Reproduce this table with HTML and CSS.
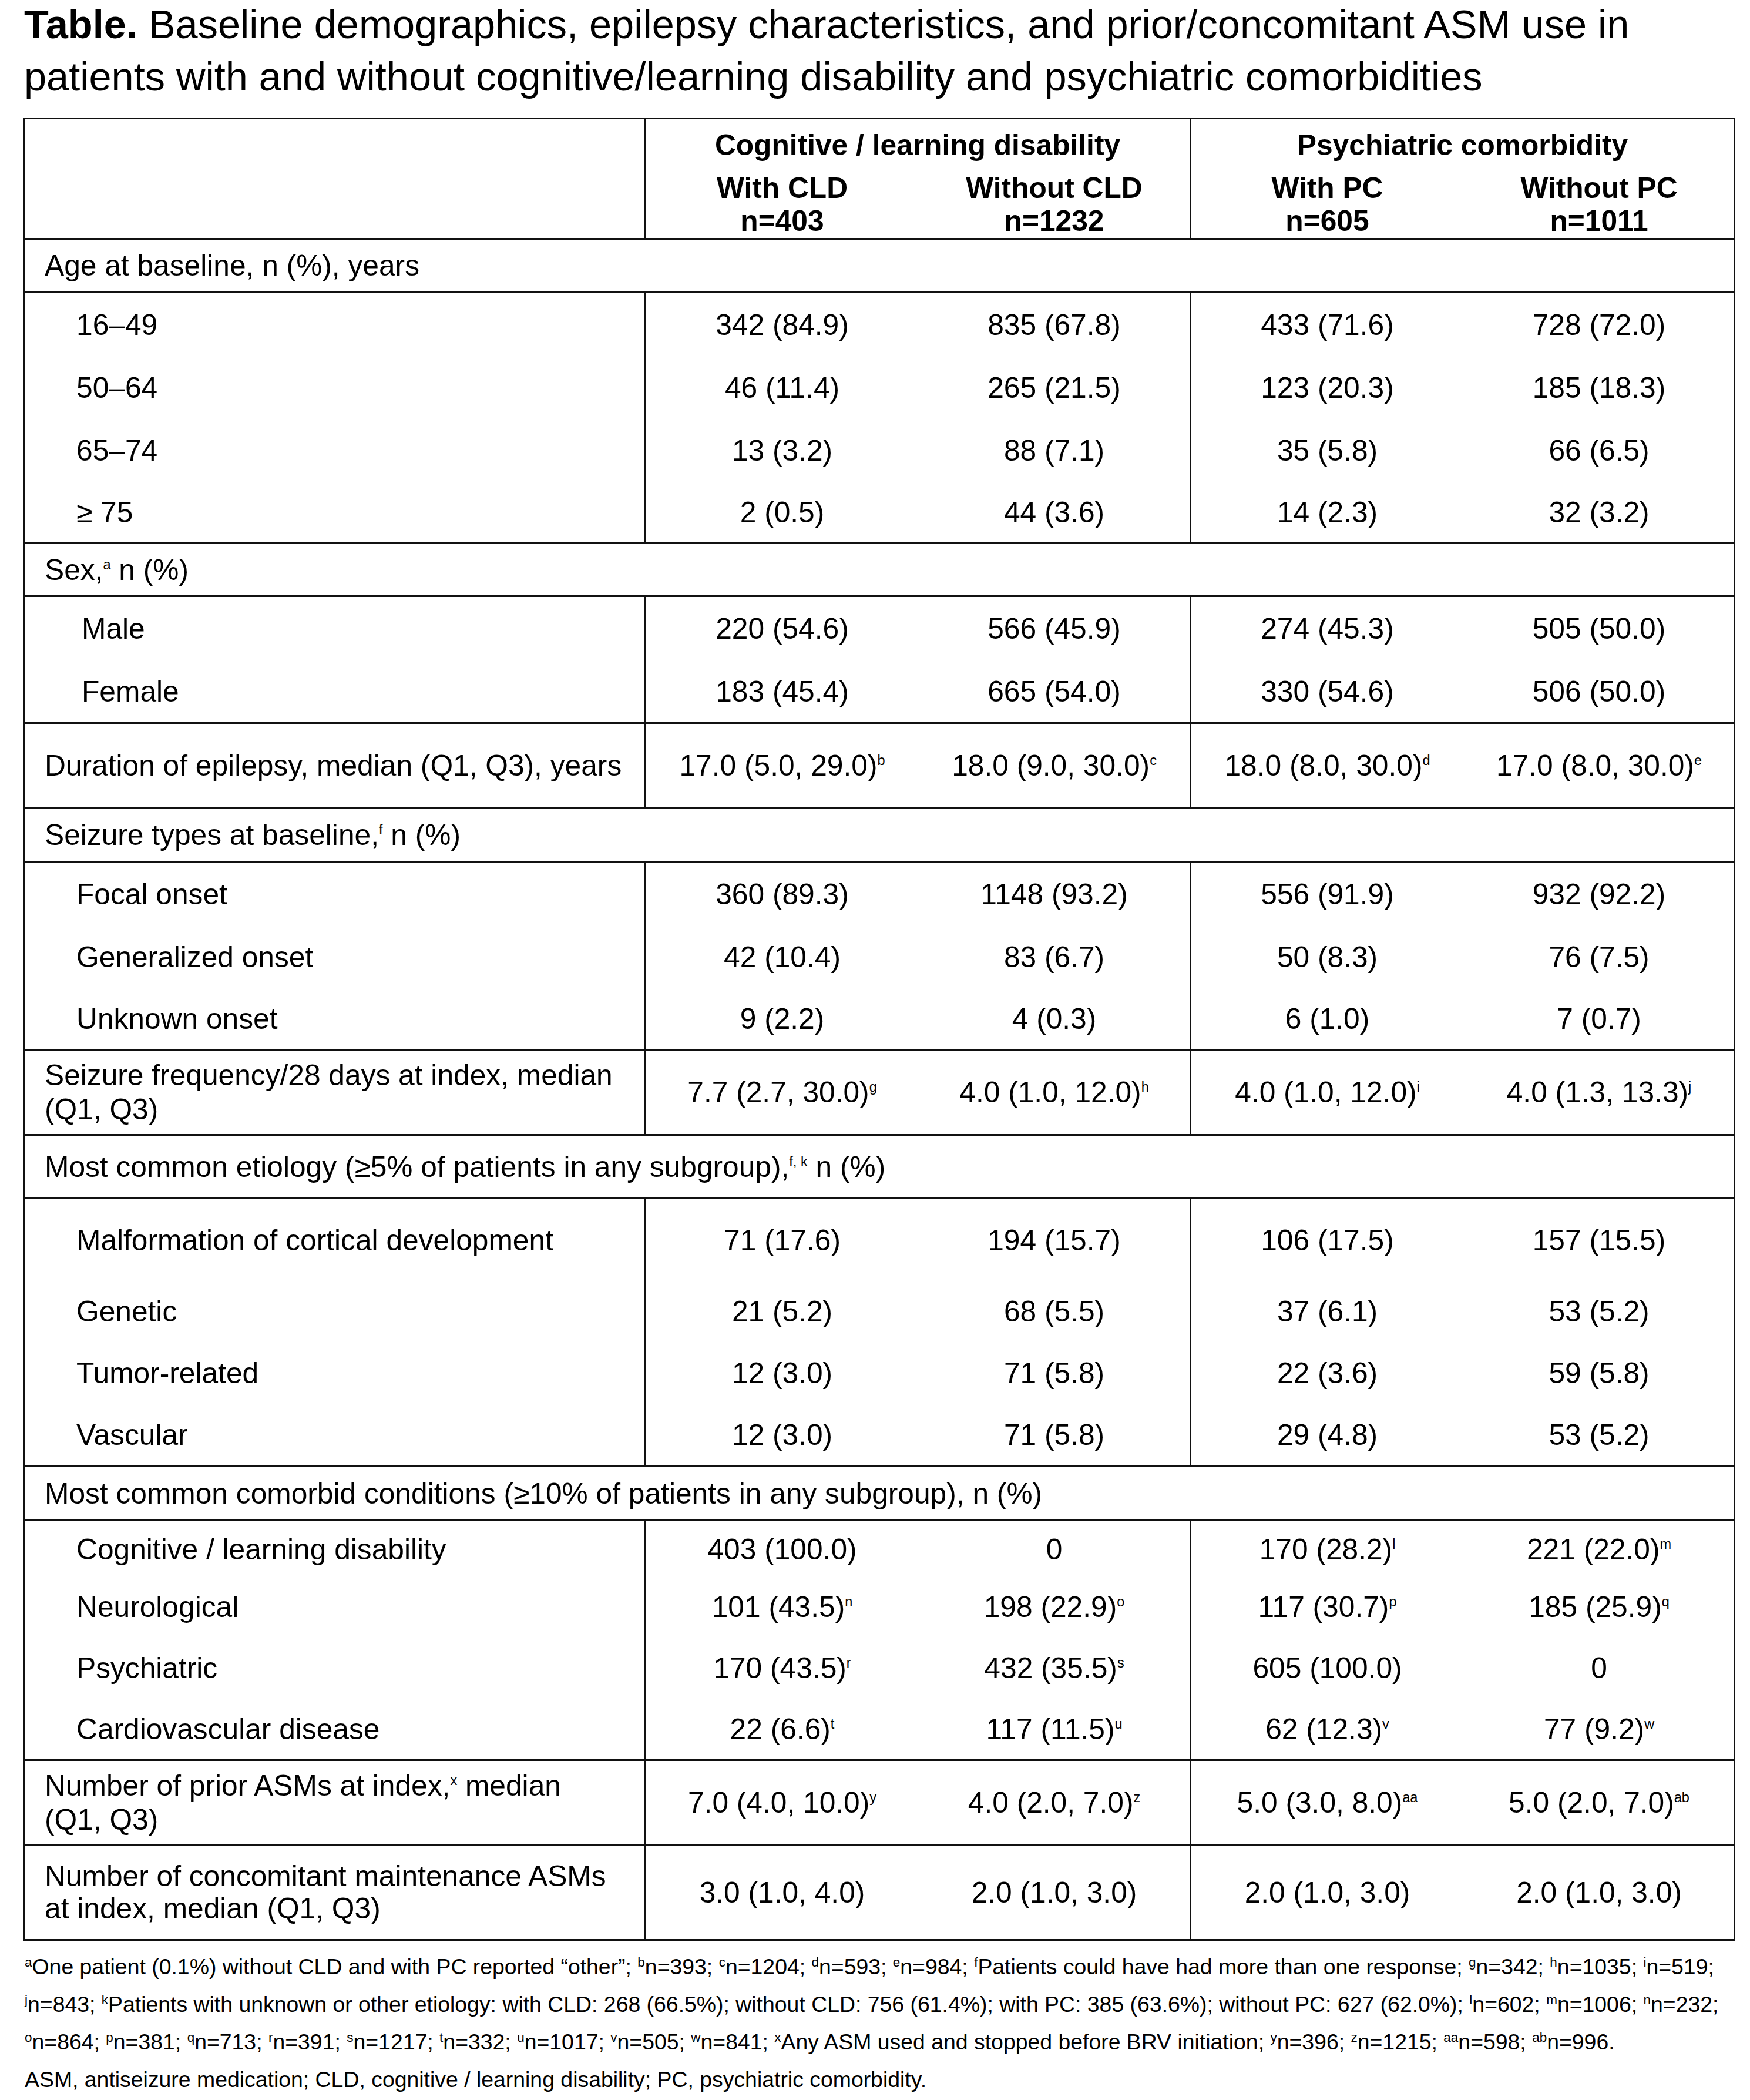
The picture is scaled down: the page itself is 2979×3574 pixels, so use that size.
FILE: index.html
```html
<!DOCTYPE html>
<html lang="en">
<head>
<meta charset="utf-8">
<title>Table</title>
<link rel="stylesheet" href="styles.css">
</head>
<body>
<div class="page">
  <h1 class="title"><b>Table.</b> Baseline demographics, epilepsy characteristics, and prior/concomitant ASM use in<br>patients with and without cognitive/learning disability and psychiatric comorbidities</h1>

  <div class="table">
    <div class="thead">
      <div class="blank"></div>
      <div class="grp first">
        <div class="grp-title">Cognitive / learning disability</div>
        <div class="subs">
          <div>With CLD<br>n=403</div>
          <div>Without CLD<br>n=1232</div>
        </div>
      </div>
      <div class="grp">
        <div class="grp-title">Psychiatric comorbidity</div>
        <div class="subs">
          <div>With PC<br>n=605</div>
          <div>Without PC<br>n=1011</div>
        </div>
      </div>
    </div>

    <div class="cat h91"><span>Age at baseline, n (%), years</span></div>
    <div class="row h107"><div class="cell label"><span>16–49</span></div><div class="cell"><span>342 (84.9)</span></div><div class="cell sep"><span>835 (67.8)</span></div><div class="cell"><span>433 (71.6)</span></div><div class="cell"><span>728 (72.0)</span></div></div>
    <div class="row h107"><div class="cell label"><span>50–64</span></div><div class="cell"><span>46 (11.4)</span></div><div class="cell sep"><span>265 (21.5)</span></div><div class="cell"><span>123 (20.3)</span></div><div class="cell"><span>185 (18.3)</span></div></div>
    <div class="row h107"><div class="cell label"><span>65–74</span></div><div class="cell"><span>13 (3.2)</span></div><div class="cell sep"><span>88 (7.1)</span></div><div class="cell"><span>35 (5.8)</span></div><div class="cell"><span>66 (6.5)</span></div></div>
    <div class="row h106 end"><div class="cell label"><span>≥ 75</span></div><div class="cell"><span>2 (0.5)</span></div><div class="cell sep"><span>44 (3.6)</span></div><div class="cell"><span>14 (2.3)</span></div><div class="cell"><span>32 (3.2)</span></div></div>

    <div class="cat h90"><span>Sex,<sup>a</sup> n (%)</span></div>
    <div class="row h108"><div class="cell label sexl"><span>Male</span></div><div class="cell"><span>220 (54.6)</span></div><div class="cell sep"><span>566 (45.9)</span></div><div class="cell"><span>274 (45.3)</span></div><div class="cell"><span>505 (50.0)</span></div></div>
    <div class="row h108 end"><div class="cell label sexl"><span>Female</span></div><div class="cell"><span>183 (45.4)</span></div><div class="cell sep"><span>665 (54.0)</span></div><div class="cell"><span>330 (54.6)</span></div><div class="cell"><span>506 (50.0)</span></div></div>

    <div class="row h144 end"><div class="cell label top"><span>Duration of epilepsy, median (Q1, Q3), years</span></div><div class="cell"><span>17.0 (5.0, 29.0)<sup>b</sup></span></div><div class="cell sep"><span>18.0 (9.0, 30.0)<sup>c</sup></span></div><div class="cell"><span>18.0 (8.0, 30.0)<sup>d</sup></span></div><div class="cell"><span>17.0 (8.0, 30.0)<sup>e</sup></span></div></div>

    <div class="cat h92"><span>Seizure types at baseline,<sup>f</sup> n (%)</span></div>
    <div class="row h107"><div class="cell label"><span>Focal onset</span></div><div class="cell"><span>360 (89.3)</span></div><div class="cell sep"><span>1148 (93.2)</span></div><div class="cell"><span>556 (91.9)</span></div><div class="cell"><span>932 (92.2)</span></div></div>
    <div class="row h107"><div class="cell label"><span>Generalized onset</span></div><div class="cell"><span>42 (10.4)</span></div><div class="cell sep"><span>83 (6.7)</span></div><div class="cell"><span>50 (8.3)</span></div><div class="cell"><span>76 (7.5)</span></div></div>
    <div class="row h106 end"><div class="cell label"><span>Unknown onset</span></div><div class="cell"><span>9 (2.2)</span></div><div class="cell sep"><span>4 (0.3)</span></div><div class="cell"><span>6 (1.0)</span></div><div class="cell"><span>7 (0.7)</span></div></div>

    <div class="row h145 end"><div class="cell label top"><span>Seizure frequency/28 days at index, median<br>(Q1, Q3)</span></div><div class="cell"><span>7.7 (2.7, 30.0)<sup>g</sup></span></div><div class="cell sep"><span>4.0 (1.0, 12.0)<sup>h</sup></span></div><div class="cell"><span>4.0 (1.0, 12.0)<sup>i</sup></span></div><div class="cell"><span>4.0 (1.3, 13.3)<sup>j</sup></span></div></div>

    <div class="cat h108"><span>Most common etiology (≥5% of patients in any subgroup),<sup>f, k</sup> n (%)</span></div>
    <div class="row h140"><div class="cell label"><span>Malformation of cortical development</span></div><div class="cell"><span>71 (17.6)</span></div><div class="cell sep"><span>194 (15.7)</span></div><div class="cell"><span>106 (17.5)</span></div><div class="cell"><span>157 (15.5)</span></div></div>
    <div class="row h102"><div class="cell label"><span>Genetic</span></div><div class="cell"><span>21 (5.2)</span></div><div class="cell sep"><span>68 (5.5)</span></div><div class="cell"><span>37 (6.1)</span></div><div class="cell"><span>53 (5.2)</span></div></div>
    <div class="row h107"><div class="cell label"><span>Tumor-related</span></div><div class="cell"><span>12 (3.0)</span></div><div class="cell sep"><span>71 (5.8)</span></div><div class="cell"><span>22 (3.6)</span></div><div class="cell"><span>59 (5.8)</span></div></div>
    <div class="row h107 end"><div class="cell label"><span>Vascular</span></div><div class="cell"><span>12 (3.0)</span></div><div class="cell sep"><span>71 (5.8)</span></div><div class="cell"><span>29 (4.8)</span></div><div class="cell"><span>53 (5.2)</span></div></div>

    <div class="cat h92"><span>Most common comorbid conditions (≥10% of patients in any subgroup), n (%)</span></div>
    <div class="row h95"><div class="cell label"><span>Cognitive / learning disability</span></div><div class="cell"><span>403 (100.0)</span></div><div class="cell sep"><span>0</span></div><div class="cell"><span>170 (28.2)<sup>l</sup></span></div><div class="cell"><span>221 (22.0)<sup>m</sup></span></div></div>
    <div class="row h101"><div class="cell label"><span>Neurological</span></div><div class="cell"><span>101 (43.5)<sup>n</sup></span></div><div class="cell sep"><span>198 (22.9)<sup>o</sup></span></div><div class="cell"><span>117 (30.7)<sup>p</sup></span></div><div class="cell"><span>185 (25.9)<sup>q</sup></span></div></div>
    <div class="row h107"><div class="cell label"><span>Psychiatric</span></div><div class="cell"><span>170 (43.5)<sup>r</sup></span></div><div class="cell sep"><span>432 (35.5)<sup>s</sup></span></div><div class="cell"><span>605 (100.0)</span></div><div class="cell"><span>0</span></div></div>
    <div class="row h105 end"><div class="cell label"><span>Cardiovascular disease</span></div><div class="cell"><span>22 (6.6)<sup>t</sup></span></div><div class="cell sep"><span>117 (11.5)<sup>u</sup></span></div><div class="cell"><span>62 (12.3)<sup>v</sup></span></div><div class="cell"><span>77 (9.2)<sup>w</sup></span></div></div>

    <div class="row h144 end"><div class="cell label top"><span>Number of prior ASMs at index,<sup>x</sup> median<br>(Q1, Q3)</span></div><div class="cell"><span>7.0 (4.0, 10.0)<sup>y</sup></span></div><div class="cell sep"><span>4.0 (2.0, 7.0)<sup>z</sup></span></div><div class="cell"><span>5.0 (3.0, 8.0)<sup>aa</sup></span></div><div class="cell"><span>5.0 (2.0, 7.0)<sup>ab</sup></span></div></div>

    <div class="row h159 multi"><div class="cell label top"><span>Number of concomitant maintenance ASMs<br>at index, median (Q1, Q3)</span></div><div class="cell"><span>3.0 (1.0, 4.0)</span></div><div class="cell sep"><span>2.0 (1.0, 3.0)</span></div><div class="cell"><span>2.0 (1.0, 3.0)</span></div><div class="cell"><span>2.0 (1.0, 3.0)</span></div></div>
  </div>

  <div class="notes">
    <p class="note"><sup>a</sup>One patient (0.1%) without CLD and with PC reported “other”; <sup>b</sup>n=393; <sup>c</sup>n=1204; <sup>d</sup>n=593; <sup>e</sup>n=984; <sup>f</sup>Patients could have had more than one response; <sup>g</sup>n=342; <sup>h</sup>n=1035; <sup>i</sup>n=519;<br><sup>j</sup>n=843; <sup>k</sup>Patients with unknown or other etiology: with CLD: 268 (66.5%); without CLD: 756 (61.4%); with PC: 385 (63.6%); without PC: 627 (62.0%); <sup>l</sup>n=602; <sup>m</sup>n=1006; <sup>n</sup>n=232;<br><sup>o</sup>n=864; <sup>p</sup>n=381; <sup>q</sup>n=713; <sup>r</sup>n=391; <sup>s</sup>n=1217; <sup>t</sup>n=332; <sup>u</sup>n=1017; <sup>v</sup>n=505; <sup>w</sup>n=841; <sup>x</sup>Any ASM used and stopped before BRV initiation; <sup>y</sup>n=396; <sup>z</sup>n=1215; <sup>aa</sup>n=598; <sup>ab</sup>n=996.</p>
    <p class="note">ASM, antiseizure medication; CLD, cognitive / learning disability; PC, psychiatric comorbidity.</p>
  </div>
</div>
</body>
</html>
```

FILE: styles.css
```css
* {
  box-sizing: border-box;
}

html, body {
  margin: 0;
  padding: 0;
  background: #ffffff;
}

body {
  color: #000000;
  font-family: "Liberation Sans", Arial, "Helvetica Neue", sans-serif;
}

.page {
  width: 2979px;
  padding: 0 0 0 40px;
}

.title {
  margin: -3px 0 0 1px;
  font-size: 68.5px;
  line-height: 89px;
  font-weight: normal;
  white-space: nowrap;
}

.title b {
  font-weight: bold;
}

.table {
  margin-top: 25px;
  width: 2914px;
  border-left: 2px solid #111;
  border-right: 2px solid #111;
  border-top: 3px solid #111;
  border-bottom: 3px solid #111;
  font-size: 49.7px;
  line-height: 58px;
}

.thead {
  display: grid;
  grid-template-columns: 1057px 928px 925px;
  height: 205px;
  border-bottom: 3px solid #111;
  font-weight: bold;
}

.blank {
  border-right: 2px solid #111;
}

.grp {
  display: flex;
  flex-direction: column;
  padding-top: 15px;
}

.grp.first {
  border-right: 2px solid #111;
}

.grp-title {
  text-align: center;
  line-height: 58px;
  white-space: nowrap;
}

.subs {
  display: grid;
  grid-template-columns: 465px 1fr;
  margin-top: 16px;
  line-height: 56px;
  text-align: center;
  white-space: nowrap;
}

.cat {
  display: flex;
  align-items: center;
  padding-left: 34px;
  border-bottom: 3px solid #111;
  white-space: nowrap;
}

.row {
  display: grid;
  grid-template-columns: 1057px 465px 463px 465px 460px;
}

.row.end {
  border-bottom: 3px solid #111;
}

.cell {
  display: flex;
  align-items: center;
  justify-content: center;
  text-align: center;
  white-space: nowrap;
}

.cell.label {
  justify-content: flex-start;
  text-align: left;
  padding-left: 88px;
  border-right: 2px solid #111;
}

.cell.label.sexl {
  padding-left: 97px;
}

.cell.label.top {
  padding-left: 34px;
}

.row.multi .cell.label {
  line-height: 55px;
}

.cell.sep {
  border-right: 2px solid #111;
}

.table sup {
  font-size: 23.5px;
  line-height: 0;
  vertical-align: 18.5px;
}

.h90 { height: 90px; }
.h91 { height: 91px; }
.h92 { height: 92px; }
.h95 { height: 95px; }
.h101 { height: 101px; }
.h102 { height: 102px; }
.h105 { height: 105px; }
.h106 { height: 106px; }
.h107 { height: 107px; }
.h108 { height: 108px; }
.h140 { height: 140px; }
.h144 { height: 144px; }
.h145 { height: 145px; }
.h159 { height: 159px; }

.notes {
  margin-top: 12px;
  padding-left: 2px;
  font-size: 37.4px;
  line-height: 64px;
}

.note {
  margin: 0;
  white-space: nowrap;
}

.notes sup {
  font-size: 22.5px;
  line-height: 0;
  vertical-align: 13px;
}
```
